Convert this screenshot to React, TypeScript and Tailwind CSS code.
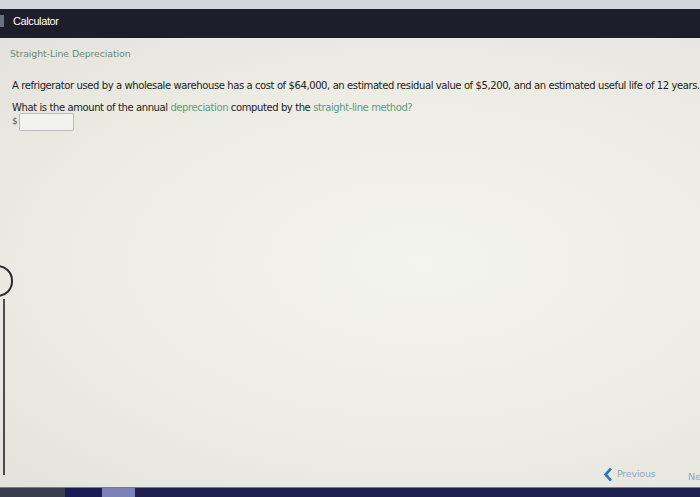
import React from "react";

export default function App() {
  return (
    <div className="relative w-[700px] h-[497px] overflow-hidden flex flex-col bg-[#ecebe4]" style={{ fontFamily: '"DejaVu Sans", Verdana, sans-serif' }}>
      <div className="h-[9px] bg-[#d4d5d8] shrink-0" />
      <div className="h-[29px] shrink-0 bg-[#1d1e29] flex items-start pt-[6px]">
        <div className="w-[4px] h-[12px] bg-[#6b7080] mr-[9px]" />
        <span className="text-white text-[11px] tracking-[-0.4px] leading-[12px]" style={{ fontFamily: '"Liberation Sans", Arial, sans-serif' }}>Calculator</span>
      </div>
      <div className="flex-1 relative bg-[radial-gradient(ellipse_at_60%_50%,#f4f4ef_0%,#ecebe4_60%,#e4e3db_100%)]">
        <div className="pl-[10px] pt-[10px] text-[9.4px] leading-[12px] text-[#6a8a7c] tracking-[-0.1px]">Straight-Line Depreciation</div>
        <div className="pl-[12px] pt-[20px] text-[10px] leading-[12px] text-[#222] whitespace-nowrap tracking-[-0.4px]">
          A refrigerator used by a wholesale warehouse has a cost of $64,000, an estimated residual value of $5,200, and an estimated useful life of 12 years.
        </div>
        <div className="pl-[12px] pt-[10px] text-[10px] leading-[12px] text-[#222] whitespace-nowrap tracking-[-0.4px]">
          What is the amount of the annual <span className="text-[#5f9a80]">depreciation</span> computed by the <span className="text-[#5f9a80]">straight-line method?</span>
        </div>
        <div className="pl-[12px] flex items-center gap-[1px] mt-[-1px]">
          <span className="text-[9px] text-[#555]">$</span>
          <div className="w-[55px] h-[18px] border border-[#b9bbbd] bg-[#f2f2ee] rounded-[2px]" />
        </div>
        <div className="absolute left-[-18px] top-[227px] w-[31px] h-[32px] rounded-full border-[2px] border-[#2a2a30]" />
        <div className="absolute left-[3px] top-[261px] bottom-[12px] w-[2px] bg-[#4a4a50]" />
        <div className="absolute left-[603px] top-[429px] flex items-center gap-[4px]">
          <svg width="10" height="15" viewBox="0 0 10 15"><path d="M8 1.5 L2.5 7.5 L8 13.5" stroke="#2a78c0" strokeWidth="2.6" fill="none" /></svg>
          <span className="text-[9.5px] text-[#8aa8c8] tracking-[-0.2px]">Previous</span>
        </div>
        <div className="absolute left-[688px] top-[432px] text-[9.5px] text-[#8aa8c8]">Ne</div>
      </div>
      <div className="h-[10px] shrink-0 flex border-t border-[#4a8ab0]">
        <div className="w-[65px] bg-[#3a3d4e]" />
        <div className="w-[37px] bg-[#1a1d55]" />
        <div className="w-[33px] bg-[#7a82b8]" />
        <div className="flex-1 bg-[#1d2050]" />
      </div>
    </div>
  );
}
